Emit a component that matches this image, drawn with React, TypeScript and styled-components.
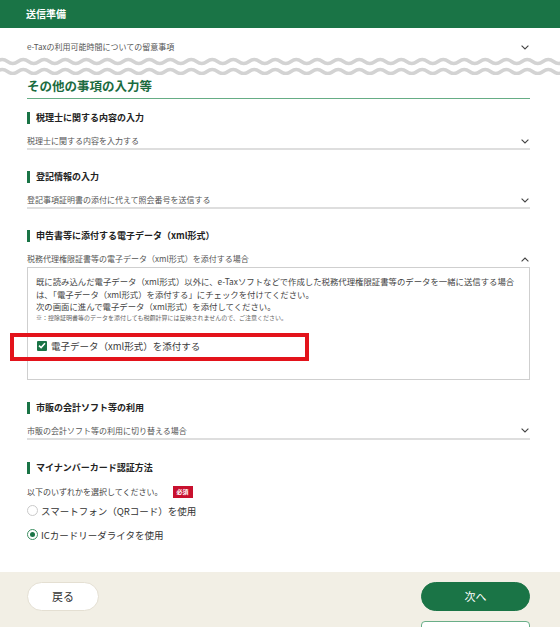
import React from 'react';
import styled, { createGlobalStyle } from 'styled-components';

const GREEN = '#1a7446';

const GlobalStyle = createGlobalStyle`
    html, body {
        margin: 0;
        padding: 0;
        background: #fff;
    }
    body {
        font-family: "Noto Sans CJK JP", "Noto Sans", sans-serif;
        color: #333;
    }
`;

const Header = styled.header`
    height: 28px;
    padding-left: 26px;
    background: ${GREEN};
    color: #fff;
    font-size: 10px;
    font-weight: bold;
    line-height: 28px;
`;

const Content = styled.div`
    padding: 0 30px 0 27px;
`;

const Toggle = styled.div<{ $top: number; $bottom: number; $line?: boolean }>`
    display: flex;
    align-items: center;
    justify-content: space-between;
    padding: ${(p) => p.$top}px 1px ${(p) => p.$bottom}px 0;
    font-size: 8px;
    line-height: 12px;
    color: #555;
    border-bottom: ${(p) => (p.$line ? '2px solid #dedede' : 'none')};
`;

const Wave = styled.svg`
    display: block;
    width: 100%;
    height: 22px;
`;

const Title = styled.h1`
    margin: 3px 0 0;
    padding-bottom: 4px;
    font-size: 12.5px;
    line-height: 16px;
    font-weight: bold;
    color: #1b6b3f;
    border-bottom: 1.5px solid #66ad85;
`;

const Section = styled.section<{ $gap: number }>`
    margin-top: ${(p) => p.$gap}px;
`;

const Heading = styled.h2`
    display: flex;
    align-items: center;
    gap: 6px;
    margin: 0;
    font-size: 9px;
    line-height: 12px;
    font-weight: bold;
    color: #222;
    &::before {
        content: '';
        width: 3px;
        height: 12px;
        background: ${GREEN};
    }
`;

const Panel = styled.div`
    border: 1px solid #cfcfcf;
    padding: 7px 8px 26px;
    color: #444;
`;

const PanelText = styled.p`
    margin: 0;
    font-size: 8.4px;
    line-height: 12.5px;
`;

const Note = styled.p`
    margin: 0;
    font-size: 6px;
    line-height: 10px;
    color: #666;
`;

const CheckRow = styled.label`
    position: relative;
    display: flex;
    align-items: center;
    margin-top: 16px;
    padding-left: 1px;
    font-size: 9.5px;
    line-height: 14px;
    color: #3a3a3a;
`;

const CheckBox = styled.span`
    display: flex;
    align-items: center;
    justify-content: center;
    width: 10px;
    height: 10px;
    margin-right: 4px;
    border-radius: 1px;
    background: ${GREEN};
`;

const Highlight = styled.span`
    position: absolute;
    top: -6px;
    left: -26px;
    width: 299px;
    height: 28px;
    box-sizing: border-box;
    border: 4px solid #e3131b;
`;

const Hint = styled.div`
    display: flex;
    align-items: center;
    margin-top: 12px;
    font-size: 8px;
    line-height: 12px;
    color: #444;
`;

const Required = styled.span`
    margin-left: 10px;
    padding: 0 4px;
    height: 12px;
    background: #c8102e;
    color: #fff;
    font-size: 6px;
    font-weight: bold;
    line-height: 12px;
`;

const RadioRow = styled.label<{ $gap: number }>`
    display: flex;
    align-items: center;
    margin-top: ${(p) => p.$gap}px;
    font-size: 9.5px;
    line-height: 14px;
    color: #333;
`;

const RadioDot = styled.span<{ $checked?: boolean }>`
    display: flex;
    align-items: center;
    justify-content: center;
    width: 11px;
    height: 11px;
    margin-right: 3px;
    box-sizing: border-box;
    border-radius: 50%;
    border: 1px solid ${(p) => (p.$checked ? '#3d8f62' : '#cacaca')};
    background: #fff;
    &::after {
        content: '';
        width: 5px;
        height: 5px;
        border-radius: 50%;
        background: ${(p) => (p.$checked ? GREEN : 'transparent')};
    }
`;

const Footer = styled.footer`
    display: flex;
    justify-content: space-between;
    align-items: flex-start;
    margin-top: 30px;
    padding: 10px 30px 30px 27px;
    background: #f2efe5;
`;

const Button = styled.button<{ $primary?: boolean; $outline?: boolean }>`
    width: ${(p) => (p.$primary || p.$outline ? 109 : 72)}px;
    height: 29px;
    border-radius: ${(p) => (p.$outline ? 4 : 15)}px;
    border: 1px solid ${(p) => (p.$primary ? GREEN : p.$outline ? '#6aae88' : '#e4dfd2')};
    background: ${(p) => (p.$primary ? GREEN : '#fff')};
    color: ${(p) => (p.$primary ? '#fff' : '#333')};
    font-family: inherit;
    font-size: 11px;
    padding: 0;
`;

const Stack = styled.div`
    display: flex;
    flex-direction: column;
    gap: 10px;
`;

const Chevron = ({ up }: { up?: boolean }) => (
    <svg width="8" height="5" viewBox="0 0 8 5">
        <polyline
            points={up ? '0.6,4.4 4,1 7.4,4.4' : '0.6,0.6 4,4 7.4,0.6'}
            fill="none"
            stroke="#444"
            strokeWidth="1.1"
        />
    </svg>
);

// quadratic wave, 21px wavelength
const wavePath = (y: number) => {
    let d = `M -3 ${y} Q 2.25 ${y - 4} 7.5 ${y}`;
    for (let x = 18; x <= 580; x += 10.5) d += ` T ${x} ${y}`;
    return d;
};

const App = () => {
    return (
        <>
            <GlobalStyle />
            <Header>送信準備</Header>
            <Content>
                <Toggle $top={13} $bottom={0}>
                    <span>e-Taxの利用可能時間についての留意事項</span>
                    <Chevron />
                </Toggle>
            </Content>
            <Wave viewBox="0 0 560 22" preserveAspectRatio="none">
                <path d={wavePath(8.5)} fill="none" stroke="#d3d3d3" strokeWidth="3.5" />
                <path d={wavePath(18.5)} fill="none" stroke="#d3d3d3" strokeWidth="3.5" />
            </Wave>
            <Content>
                <Title>その他の事項の入力等</Title>

                <Section $gap={13}>
                    <Heading>税理士に関する内容の入力</Heading>
                    <Toggle $top={11} $bottom={1} $line>
                        <span>税理士に関する内容を入力する</span>
                        <Chevron />
                    </Toggle>
                </Section>

                <Section $gap={21}>
                    <Heading>登記情報の入力</Heading>
                    <Toggle $top={11} $bottom={1} $line>
                        <span>登記事項証明書の添付に代えて照会番号を送信する</span>
                        <Chevron />
                    </Toggle>
                </Section>

                <Section $gap={21}>
                    <Heading>申告書等に添付する電子データ（xml形式）</Heading>
                    <Toggle $top={11} $bottom={2}>
                        <span>税務代理権限証書等の電子データ（xml形式）を添付する場合</span>
                        <Chevron up />
                    </Toggle>
                    <Panel>
                        <PanelText>
                            既に読み込んだ電子データ（xml形式）以外に、e-Taxソフトなどで作成した税務代理権限証書等のデータを一緒に送信する場合は、「電子データ（xml形式）を添付する」にチェックを付けてください。
                        </PanelText>
                        <PanelText>次の画面に進んで電子データ（xml形式）を添付してください。</PanelText>
                        <Note>※：控除証明書等のデータを添付しても税額計算には反映されませんので、ご注意ください。</Note>
                        <CheckRow>
                            <Highlight />
                            <CheckBox>
                                <svg width="8" height="7" viewBox="0 0 8 7">
                                    <polyline points="1,3.6 3.1,5.6 7,1.2" fill="none" stroke="#fff" strokeWidth="1.5" />
                                </svg>
                            </CheckBox>
                            電子データ（xml形式）を添付する
                        </CheckRow>
                    </Panel>
                </Section>

                <Section $gap={22}>
                    <Heading>市販の会計ソフト等の利用</Heading>
                    <Toggle $top={11} $bottom={1} $line>
                        <span>市販の会計ソフト等の利用に切り替える場合</span>
                        <Chevron />
                    </Toggle>
                </Section>

                <Section $gap={22}>
                    <Heading>マイナンバーカード認証方法</Heading>
                    <Hint>
                        以下のいずれかを選択してください。
                        <Required>必須</Required>
                    </Hint>
                    <RadioRow $gap={6}>
                        <RadioDot />
                        スマートフォン（QRコード）を使用
                    </RadioRow>
                    <RadioRow $gap={10}>
                        <RadioDot $checked />
                        ICカードリーダライタを使用
                    </RadioRow>
                </Section>
            </Content>
            <Footer>
                <Button>戻る</Button>
                <Stack>
                    <Button $primary>次へ</Button>
                    <Button $outline />
                </Stack>
            </Footer>
        </>
    );
};

export default App;
